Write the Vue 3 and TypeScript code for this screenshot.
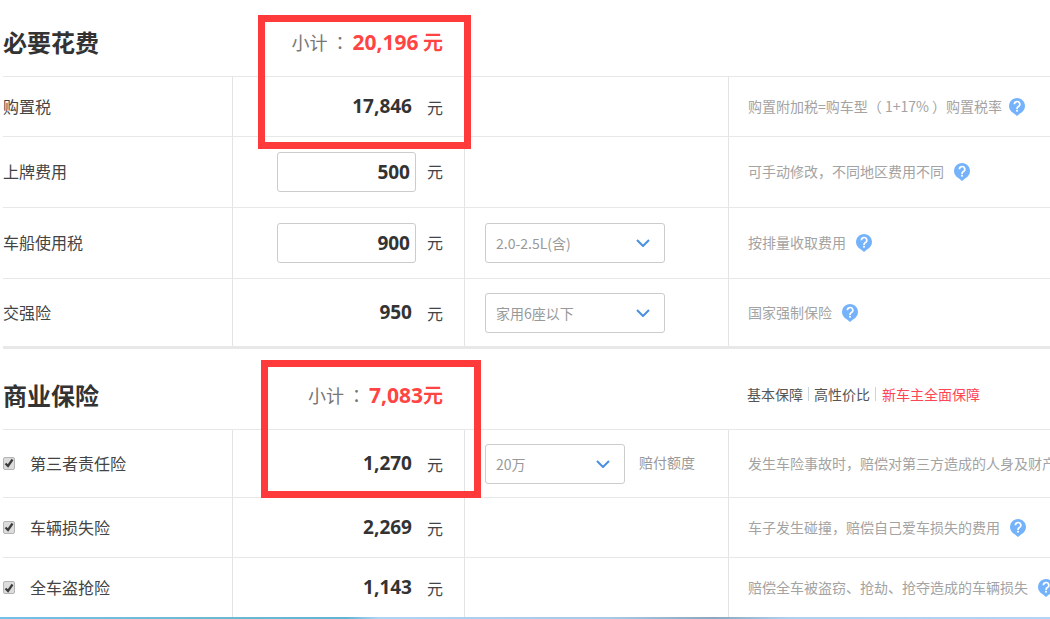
<script setup lang="ts">
interface Row {
  name: string
  height: number
  amount: string
  editable?: boolean
  select?: { text: string; width: number; note?: string }
  hint: string
  help?: boolean
  checked?: boolean
  gap?: number
  last?: boolean
}

const required: Row[] = [
  { name: '购置税', height: 60, amount: '17,846', hint: '购置附加税=购车型（ 1+17% ）购置税率', help: true, gap: 7 },
  { name: '上牌费用', height: 71, amount: '500', editable: true, hint: '可手动修改，不同地区费用不同', help: true },
  { name: '车船使用税', height: 71, amount: '900', editable: true, select: { text: '2.0-2.5L(含)', width: 180 }, hint: '按排量收取费用', help: true },
  { name: '交强险', height: 67, amount: '950', select: { text: '家用6座以下', width: 180 }, hint: '国家强制保险', help: true, last: true }
]

const commercial: Row[] = [
  { name: '第三者责任险', height: 68, amount: '1,270', checked: true, select: { text: '20万', width: 140, note: '赔付额度' }, hint: '发生车险事故时，赔偿对第三方造成的人身及财产损失' },
  { name: '车辆损失险', height: 60, amount: '2,269', checked: true, hint: '车子发生碰撞，赔偿自己爱车损失的费用', help: true },
  { name: '全车盗抢险', height: 60, amount: '1,143', checked: true, hint: '赔偿全车被盗窃、抢劫、抢夺造成的车辆损失', help: true, last: true }
]

const sections = [
  { title: '必要花费', height: 77, rows: required, total: '20,196', unit: ' 元', first: true },
  { title: '商业保险', height: 81, rows: commercial, total: '7,083', unit: '元', first: false }
]
</script>

<template>
  <main class="page">
    <section v-for="s in sections" :key="s.title" class="section">
      <header class="head" :class="{ first: s.first }" :style="{ height: s.height + 'px' }">
        <h2 class="title">{{ s.title }}</h2>
        <div class="subtotal">
          <span>小计</span><span class="colon">：</span>
          <strong class="sub-value">{{ s.total }}<i class="sub-unit">{{ s.unit }}</i></strong>
        </div>
        <nav v-if="!s.first" class="plans">
          <span>基本保障</span><b class="sep"></b><span>高性价比</span><b class="sep"></b><span class="hot">新车主全面保障</span>
        </nav>
      </header>
      <div v-for="r in s.rows" :key="r.name" class="row" :class="{ last: r.last }" :style="{ height: r.height + 'px' }">
        <div class="cell name">
          <span v-if="r.checked" class="check">
            <svg width="10" height="10" viewBox="0 0 10 10"><path d="M1.5 5.5 L4 8 L8.5 1.5" fill="none" stroke="#3c3c3c" stroke-width="2.2" /></svg>
          </span>
          <span class="name-text">{{ r.name }}</span>
        </div>
        <div class="cell money">
          <input v-if="r.editable" class="amount-input" :value="r.amount" />
          <span v-else class="amount">{{ r.amount }}</span>
          <span class="yuan" :class="{ raised: r.editable }">元</span>
        </div>
        <div class="cell choice">
          <template v-if="r.select">
            <div class="select" :style="{ width: r.select.width + 'px' }">
              <span>{{ r.select.text }}</span>
              <svg width="14" height="8" viewBox="0 0 14 8"><path d="M1 1 L7 7 L13 1" fill="none" stroke="#4a8fe0" stroke-width="2" /></svg>
            </div>
            <span v-if="r.select.note" class="note">{{ r.select.note }}</span>
          </template>
        </div>
        <div class="cell hint">
          <span class="hint-text">{{ r.hint }}</span>
          <svg v-if="r.help" class="help" :style="{ marginLeft: (r.gap ?? 10) + 'px' }" width="16" height="18" viewBox="0 0 16 18">
            <path d="M8 0 A8 8 0 0 1 11 15.4 L8 18 L5 15.4 A8 8 0 0 1 8 0 Z" fill="#74b3fb" />
            <path d="M5.4 6.2 A2.7 2.7 0 1 1 9.4 8.6 C8.3 9.2 8 9.7 8 11" fill="none" stroke="#fff" stroke-width="1.7" />
            <rect x="7.1" y="11.8" width="1.8" height="1.8" fill="#fff" />
          </svg>
        </div>
      </div>
      <div v-if="s.first" class="divider"></div>
    </section>
    <div class="bottom-bar"></div>
    <div class="mark mark-one"></div>
    <div class="mark mark-two"></div>
  </main>
</template>

<style>
html, body { margin: 0; background: #fff; overflow: hidden; }
</style>

<style scoped>
.page {
  position: relative;
  width: 1050px;
  height: 619px;
  overflow: hidden;
  padding-left: 3px;
  box-sizing: border-box;
  font-family: "Noto Sans CJK SC", "Open Sans", sans-serif;
  color: #333;
}
.head {
  display: flex;
  align-items: center;
  box-sizing: border-box;
  padding-top: 12px;
  border-bottom: 1px solid #e8e8e8;
  position: relative;
}
.head.first { padding-top: 8px; }
.title {
  margin: 0;
  width: 230px;
  font-size: 24px;
  font-weight: 700;
  line-height: 32px;
  color: #333;
}
.subtotal {
  display: flex;
  justify-content: flex-end;
  align-items: center;
  width: 210px;
  white-space: nowrap;
  font-size: 18px;
  color: #777;
  line-height: 30px;
  flex: none;
}
.colon {
  width: 25px;
  text-align: center;
  font-family: "Noto Sans CJK TC", sans-serif;
}
.sub-value {
  font-family: "Open Sans", "Noto Sans CJK SC", sans-serif;
  font-size: 21px;
  font-weight: 700;
  color: #ff4444;
}
.sub-unit {
  font-family: "Noto Sans CJK SC", sans-serif;
  font-size: 20px;
  font-style: normal;
  white-space: pre;
}
.plans {
  position: absolute;
  left: 744px;
  top: 35px;
  display: flex;
  align-items: center;
  font-size: 14px;
  line-height: 20px;
  color: #555;
}
.plans .hot { color: #ff4455; margin-left: 1px; }
.sep {
  width: 1px;
  height: 14px;
  margin: 0 5px;
  background: #cbd5e0;
}
.row {
  display: grid;
  grid-template-columns: 230px 232px 264px 1fr;
  box-sizing: border-box;
  border-bottom: 1px solid #e8e8e8;
}
.row.last { border-bottom: 0; }
.cell {
  display: flex;
  align-items: center;
  box-sizing: border-box;
  min-width: 0;
  white-space: nowrap;
}
.name {
  font-size: 16px;
  color: #444;
  border-right: 1px solid #e4e4e4;
}
.name-text { margin-bottom: 2px; }
.check {
  display: flex;
  align-items: center;
  justify-content: center;
  width: 12px;
  height: 13px;
  margin-right: 15px;
  margin-bottom: 1px;
  border: 1px solid #b4b4b4;
  border-radius: 2px;
  box-sizing: border-box;
  background: #dcdcdc;
}
.money {
  justify-content: flex-end;
  padding-right: 21px;
  border-right: 1px solid #e4e4e4;
}
.amount, .amount-input {
  font-family: "Open Sans", sans-serif;
  font-size: 19px;
  font-weight: 700;
  color: #333;
}
.amount { margin-bottom: 2px; }
.amount-input {
  width: 139px;
  height: 40px;
  margin-right: -4px;
  padding: 0 5px 0 0;
  box-sizing: border-box;
  border: 1px solid #ccc;
  border-radius: 3px;
  text-align: right;
  outline: none;
}
.yuan {
  margin-left: 15px;
  font-size: 16px;
  color: #444;
}
.yuan.raised { margin-bottom: 3px; }
.choice {
  padding-left: 20px;
  border-right: 1px solid #e4e4e4;
}
.select {
  display: flex;
  align-items: center;
  justify-content: space-between;
  height: 40px;
  padding: 0 14px 0 10px;
  box-sizing: border-box;
  border: 1px solid #ccc;
  border-radius: 3px;
  font-size: 14px;
  color: #999;
}
.note {
  margin-left: 14px;
  margin-bottom: 3px;
  font-size: 14px;
  color: #999;
}
.hint {
  padding-left: 19px;
  font-size: 14px;
  color: #a3a3a3;
}
.hint-text { margin-bottom: 2px; }
.help { flex: none; }
.divider {
  height: 3px;
  background: #e8e8e8;
}
.bottom-bar {
  position: absolute;
  left: 0;
  right: 0;
  bottom: 0;
  height: 2px;
  background: linear-gradient(90deg, #74c0ec 0%, #6cbad0 20%, #5fb5d5 33%, #b0d4f4 36%, #a9c9e5 58%, #8ca6bc 68%, #b0d0ee 75%, #b4d4f6 100%);
}
.mark {
  position: absolute;
  box-sizing: border-box;
  border: 7px solid #ff3a3a;
}
.mark-one { left: 258px; top: 15px; width: 213px; height: 134px; }
.mark-two { left: 261px; top: 360px; width: 220px; height: 138px; }
</style>
